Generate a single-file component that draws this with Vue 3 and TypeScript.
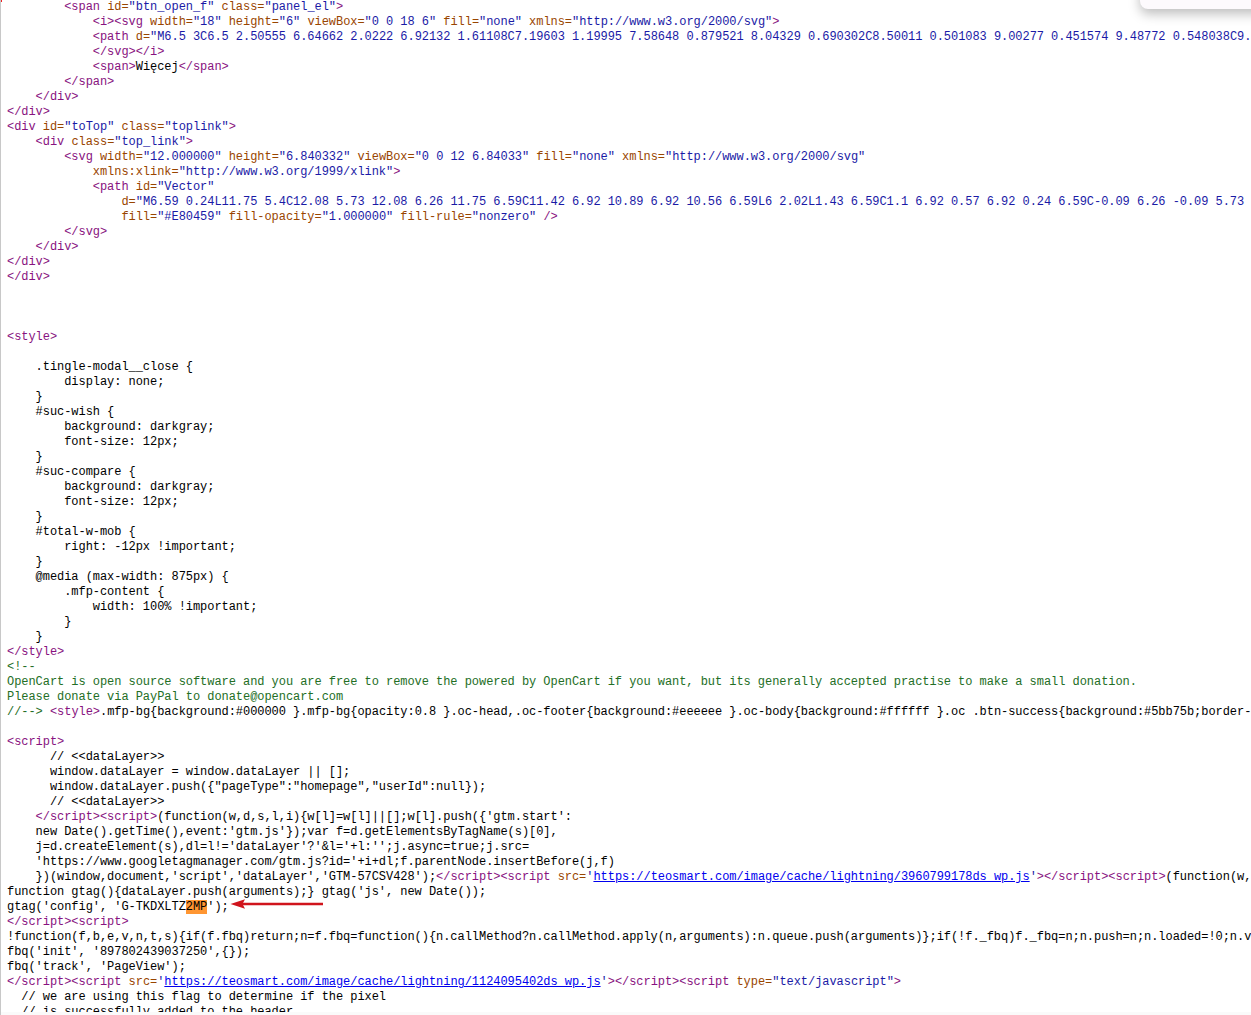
<script setup lang="ts">
type Tok = [string, string];
const T = (s: string): Tok => ['t', s];
const A = (s: string): Tok => ['a', s];
const V = (s: string): Tok => ['v', s];
const C = (s: string): Tok => ['c', s];
const L = (s: string): Tok => ['l', s];
const X = (s: string): Tok => ['x', s];
const H = (s: string): Tok => ['h', s];

const lines: Tok[][] = [
  [T('        <span '), A('id='), V('"btn_open_f" '), A('class='), V('"panel_el"'), T('>')],
  [T('            <i><svg '), A('width='), V('"18" '), A('height='), V('"6" '), A('viewBox='), V('"0 0 18 6" '), A('fill='), V('"none" '), A('xmlns='), V('"http://www.w3.org/2000/svg"'), T('>')],
  [T('            <path '), A('d='), V('"M6.5 3C6.5 2.50555 6.64662 2.0222 6.92132 1.61108C7.19603 1.19995 7.58648 0.879521 8.04329 0.690302C8.50011 0.501083 9.00277 0.451574 9.48772 0.548038C9.97266 0.644502')],
  [T('            </svg></i>')],
  [T('            <span>'), X('Więcej'), T('</span>')],
  [T('        </span>')],
  [T('    </div>')],
  [T('</div>')],
  [T('<div '), A('id='), V('"toTop" '), A('class='), V('"toplink"'), T('>')],
  [T('    <div '), A('class='), V('"top_link"'), T('>')],
  [T('        <svg '), A('width='), V('"12.000000" '), A('height='), V('"6.840332" '), A('viewBox='), V('"0 0 12 6.84033" '), A('fill='), V('"none" '), A('xmlns='), V('"http://www.w3.org/2000/svg"')],
  [A('            xmlns:xlink='), V('"http://www.w3.org/1999/xlink"'), T('>')],
  [T('            <path '), A('id='), V('"Vector"')],
  [A('                d='), V('"M6.59 0.24L11.75 5.4C12.08 5.73 12.08 6.26 11.75 6.59C11.42 6.92 10.89 6.92 10.56 6.59L6 2.02L1.43 6.59C1.1 6.92 0.57 6.92 0.24 6.59C-0.09 6.26 -0.09 5.73 0.24 5.4L5.4 0.24')],
  [A('                fill='), V('"#E80459" '), A('fill-opacity='), V('"1.000000" '), A('fill-rule='), V('"nonzero" '), T('/>')],
  [T('        </svg>')],
  [T('    </div>')],
  [T('</div>')],
  [T('</div>')],
  [], [], [],
  [T('<style>')],
  [],
  [X('    .tingle-modal__close {')],
  [X('        display: none;')],
  [X('    }')],
  [X('    #suc-wish {')],
  [X('        background: darkgray;')],
  [X('        font-size: 12px;')],
  [X('    }')],
  [X('    #suc-compare {')],
  [X('        background: darkgray;')],
  [X('        font-size: 12px;')],
  [X('    }')],
  [X('    #total-w-mob {')],
  [X('        right: -12px !important;')],
  [X('    }')],
  [X('    @media (max-width: 875px) {')],
  [X('        .mfp-content {')],
  [X('            width: 100% !important;')],
  [X('        }')],
  [X('    }')],
  [T('</style>')],
  [C('<!--')],
  [C('OpenCart is open source software and you are free to remove the powered by OpenCart if you want, but its generally accepted practise to make a small donation.')],
  [C('Please donate via PayPal to donate@opencart.com')],
  [C('//-->'), X(' '), T('<style>'), X('.mfp-bg{background:#000000 }.mfp-bg{opacity:0.8 }.oc-head,.oc-footer{background:#eeeeee }.oc-body{background:#ffffff }.oc .btn-success{background:#5bb75b;border-color:#5bb75b }')],
  [],
  [T('<script>')],
  [X('      // <<dataLayer>>')],
  [X('      window.dataLayer = window.dataLayer || [];')],
  [X('      window.dataLayer.push({"pageType":"homepage","userId":null});')],
  [X('      // <<dataLayer>>')],
  [T('    </scr' + 'ipt><script>'), X("(function(w,d,s,l,i){w[l]=w[l]||[];w[l].push({'gtm.start':")],
  [X("    new Date().getTime(),event:'gtm.js'});var f=d.getElementsByTagName(s)[0],")],
  [X("    j=d.createElement(s),dl=l!='dataLayer'?'&l='+l:'';j.async=true;j.src=")],
  [X("    'https://www.googletagmanager.com/gtm.js?id='+i+dl;f.parentNode.insertBefore(j,f)")],
  [X("    })(window,document,'script','dataLayer','GTM-57CSV428');"), T('</scr' + 'ipt><script '), A('src='), V("'"), L('https://teosmart.com/image/cache/lightning/3960799178ds_wp.js'), V("'"), T('></scr' + 'ipt><script>'), X('(function(w,d,s,l,i){')],
  [X('function gtag(){dataLayer.push(arguments);} gtag(\'js\', new Date());')],
  [X("gtag('config', 'G-TKDXLTZ"), H('2MP'), X("');")],
  [T('</scr' + 'ipt><script>')],
  [X('!function(f,b,e,v,n,t,s){if(f.fbq)return;n=f.fbq=function(){n.callMethod?n.callMethod.apply(n,arguments):n.queue.push(arguments)};if(!f._fbq)f._fbq=n;n.push=n;n.loaded=!0;n.version=\'2.0\';')],
  [X("fbq('init', '897802439037250',{});")],
  [X("fbq('track', 'PageView');")],
  [T('</scr' + 'ipt><script '), A('src='), V("'"), L('https://teosmart.com/image/cache/lightning/1124095402ds_wp.js'), V("'"), T('></scr' + 'ipt><script '), A('type='), V('"text/javascript"'), T('>')],
  [X('  // we are using this flag to determine if the pixel')],
  [X('  // is successfully added to the header')],
];
</script>

<template>
  <div class="page">
    <pre class="source"><div v-for="(line, i) in lines" :key="i" class="line"><span v-for="(tok, j) in line" :key="j" :class="tok[0]">{{ tok[1] }}</span></div></pre>
    <div class="corner"></div>
    <div class="popup"></div>
    <svg class="arrow" width="94" height="12" viewBox="0 0 94 12" fill="none" xmlns="http://www.w3.org/2000/svg">
      <path d="M93 6H10" stroke="#d0141c" stroke-width="2.6" />
      <path d="M0.5 6L15 1.2L12.5 6L15 10.8Z" fill="#d0141c" />
    </svg>
    <div class="strip"></div>
  </div>
</template>

<style scoped>
.page {
  position: relative;
  width: 1251px;
  height: 1015px;
  overflow: hidden;
  background: #fff;
  border-left: 1px solid #c8c8c8;
  box-sizing: border-box;
}
.source {
  margin: 0;
  padding: 0 0 0 6px;
  font-family: "Liberation Mono", monospace;
  font-size: 12px;
  line-height: 15px;
  letter-spacing: -0.05px;
  color: #000;
}
.line {
  height: 15px;
  white-space: pre;
}
.t { color: #881280; }
.a { color: #994500; }
.v { color: #1a1aa6; }
.c { color: #236e25; }
.x { color: #000; }
.l { color: #0000ee; text-decoration: underline; }
.h { background: #ff9632; color: #000; }
.corner {
  position: absolute;
  left: -1px;
  top: 0;
  width: 2px;
  height: 2px;
  background: #f02020;
}
.popup {
  position: absolute;
  top: -20px;
  right: -20px;
  width: 131px;
  height: 29px;
  background: #fdfafd;
  border-radius: 8px;
  box-shadow: 0 5px 12px rgba(0, 0, 0, 0.26);
}
.arrow {
  position: absolute;
  left: 229px;
  top: 898px;
}
.strip {
  position: absolute;
  left: -1px;
  right: 0;
  bottom: 0;
  height: 3px;
  background: #fafafa;
}
</style>
